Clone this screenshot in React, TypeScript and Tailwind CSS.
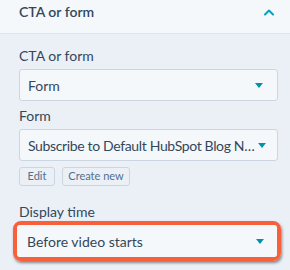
import React from 'react'

const font = { fontFamily: 'Lato, "Open Sans", sans-serif' }

function Caret() {
  return (
    <svg width="8" height="5" viewBox="0 0 8 5" className="shrink-0">
      <path d="M0 0 H8 L4 5 Z" fill="#0091ae" />
    </svg>
  )
}

function Select({ value, tight }: { value: string; tight?: boolean }) {
  return (
    <div className="flex h-[32px] items-center justify-between gap-[4px] rounded-[3px] border border-[#cbd6e2] bg-[#f5f8fa] pl-[8px] pr-[14px]">
      <span className={tight ? 'whitespace-nowrap text-[14px] tracking-[-0.35px] text-[#33475b]' : 'whitespace-nowrap text-[14px] text-[#33475b]'}>{value}</span>
      <Caret />
    </div>
  )
}

export default function App() {
  return (
    <div className="h-[270px] w-[290px] overflow-hidden bg-[#eaf0f6] antialiased" style={font}>
      <div className="flex h-[34px] items-start justify-between border-b border-[#dfe3eb] bg-[#f5f8fa] pl-[19px] pr-[16px] pt-[2px]">
        <span className="text-[14px] font-semibold leading-[20px] text-[#33475b]">CTA or form</span>
        <svg width="10" height="7" viewBox="0 0 10 7" className="mt-[7px]">
          <path d="M1 5.5 L5 1.5 L9 5.5" fill="none" stroke="#00a4bd" strokeWidth="2" strokeLinecap="round" strokeLinejoin="round" />
        </svg>
      </div>

      <div className="px-[19px] pr-[12px] pt-[12px]">
        <div className="text-[14px] leading-[20px] text-[#33475b]">CTA or form</div>
        <div className="mt-[3px]">
          <Select value="Form" />
        </div>

        <div className="mt-[5px] text-[14px] leading-[20px] text-[#33475b]">Form</div>
        <div className="mt-[3px]">
          <Select value="Subscribe to Default HubSpot Blog N…" tight />
        </div>

        <div className="mt-[6px] flex gap-[7px]">
          <button className="h-[19px] w-[36px] rounded-[3px] border border-[#cbd6e2] bg-[#eaf0f6] text-[11px] text-[#516f90]">Edit</button>
          <button className="h-[19px] w-[68px] rounded-[3px] border border-[#cbd6e2] bg-[#eaf0f6] text-[11px] text-[#516f90]">Create new</button>
        </div>

        <div className="mt-[16px] text-[14px] leading-[20px] text-[#33475b]">Display time</div>
        <div className="-ml-[6px] -mr-[3px] -mt-[1px] rounded-[8px] border-4 border-[#f8603b] shadow-[1px_2px_3px_rgba(0,0,0,0.45)]">
          <div className="flex h-[32px] items-center justify-between rounded-[3px] bg-[#f5f8fa] pl-[10px] pr-[13px]">
            <span className="text-[14px] text-[#33475b]">Before video starts</span>
            <Caret />
          </div>
        </div>
      </div>
    </div>
  )
}
